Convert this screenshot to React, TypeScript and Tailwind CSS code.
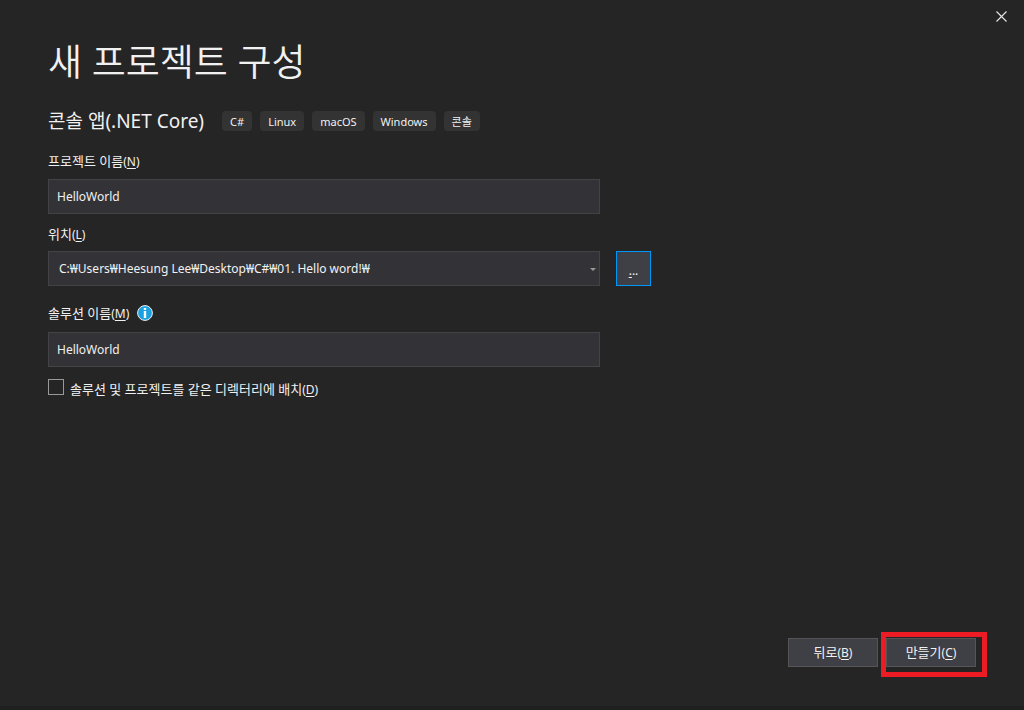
import { useState, type ReactNode } from 'react';

const tags = ['C#', 'Linux', 'macOS', 'Windows', '콘솔'];

const fieldClass =
  'h-[35px] w-full border border-[#434346] bg-[#333337] text-xs text-[#f1f1f1] outline-none';

// Underlined access key, e.g. (N)
const AccessKey = ({ letter }: { letter: string }) => (
  <span className="text-xs">
    (<span className="underline underline-offset-2">{letter}</span>)
  </span>
);

interface FieldLabelProps {
  htmlFor: string;
  accessKey: string;
  children: ReactNode;
}

const FieldLabel = ({ htmlFor, accessKey, children }: FieldLabelProps) => (
  <label htmlFor={htmlFor} className="block text-[13px] leading-[20px]">
    {children}
    <AccessKey letter={accessKey} />
  </label>
);

const InfoIcon = () => (
  <svg className="h-4 w-4" viewBox="0 0 16 16" aria-hidden="true">
    <circle cx="8" cy="8" r="7.4" fill="#1ba1e2" stroke="#f1f1f1" strokeWidth="1" />
    <path d="M6.8 3h2.4v2H6.8zM6.8 6h2.4v7H6.8z" fill="#fff" />
  </svg>
);

const App = () => {
  const [projectName, setProjectName] = useState('HelloWorld');
  const [solutionName, setSolutionName] = useState('HelloWorld');
  const [sameDirectory, setSameDirectory] = useState(false);

  return (
    <div className="flex min-h-screen flex-col border-b-4 border-[#1f1f20] bg-[#252526] font-['Noto_Sans','Noto_Sans_CJK_KR',sans-serif] text-[#f1f1f1]">
      <header className="flex h-8 justify-end px-3">
        <button type="button" aria-label="닫기" className="flex h-8 w-[22px] items-center justify-center">
          <svg className="h-[11px] w-[11px]" viewBox="0 0 11 11" stroke="#e8e8e8" strokeWidth="1.1">
            <path d="M.5.5l10 10M10.5.5l-10 10" />
          </svg>
        </button>
      </header>

      <main className="flex-1 px-12">
        <h1 className="text-[37px] leading-[60px] font-[350]">새 프로젝트 구성</h1>

        <div className="mt-4 flex flex-wrap items-center gap-[18px]">
          <h2 className="text-[19px] leading-[26px]">콘솔 앱(.NET Core)</h2>
          <ul className="flex gap-2">
            {tags.map((tag) => (
              <li key={tag} className="h-5 rounded bg-[#333334] px-2 text-[11px] leading-[21px]">
                {tag}
              </li>
            ))}
          </ul>
        </div>

        <form className="mt-[17px]">
          <div className="max-w-[552px]">
            <FieldLabel htmlFor="project-name" accessKey="N">프로젝트 이름</FieldLabel>
            <input
              id="project-name"
              type="text"
              className={`${fieldClass} mt-2 px-2`}
              value={projectName}
              onChange={(e) => setProjectName(e.target.value)}
            />
          </div>

          <div className="mt-[10px]">
            <FieldLabel htmlFor="location" accessKey="L">위치</FieldLabel>
            <div className="mt-[7px] flex gap-4">
              <div className="relative w-full max-w-[552px]">
                <select id="location" className={`${fieldClass} block appearance-none px-[10px]`}>
                  <option>C:₩Users₩Heesung Lee₩Desktop₩C#₩01. Hello word!₩</option>
                </select>
                <svg
                  className="pointer-events-none absolute top-[17px] right-1 h-[3px] w-[6px]"
                  viewBox="0 0 6 3"
                  fill="#999"
                >
                  <path d="M0 0h6L3 3z" />
                </svg>
              </div>
              <button
                type="button"
                aria-label="찾아보기"
                className="h-[35px] w-[35px] shrink-0 border border-[#0097fb] bg-[#3f3f46] pt-1 text-xs"
              >
                <span className="underline underline-offset-2">.</span>..
              </button>
            </div>
          </div>

          <div className="mt-[17px] max-w-[552px]">
            <div className="flex items-center gap-2">
              <FieldLabel htmlFor="solution-name" accessKey="M">솔루션 이름</FieldLabel>
              <InfoIcon />
            </div>
            <input
              id="solution-name"
              type="text"
              className={`${fieldClass} mt-[9px] px-2`}
              value={solutionName}
              onChange={(e) => setSolutionName(e.target.value)}
            />
          </div>

          <div className="mt-3 flex items-start gap-[6px]">
            <input
              id="same-directory"
              type="checkbox"
              className="h-4 w-4 appearance-none border border-[#999] bg-[#252526] checked:bg-[#0097fb]"
              checked={sameDirectory}
              onChange={(e) => setSameDirectory(e.target.checked)}
            />
            <FieldLabel htmlFor="same-directory" accessKey="D">
              솔루션 및 프로젝트를 같은 디렉터리에 배치
            </FieldLabel>
          </div>
        </form>
      </main>

      <footer className="flex justify-end gap-2 pr-12 pb-[39px]">
        <button type="button" className="h-[29px] w-[90px] border border-[#555] bg-[#3f3f46] text-[13px]">
          뒤로
          <AccessKey letter="B" />
        </button>
        <div className="relative">
          <button type="button" className="h-[29px] w-[90px] border border-[#555] bg-[#3f3f46] text-[13px]">
            만들기
            <AccessKey letter="C" />
          </button>
          {/* Highlight frame around the create button */}
          <div className="pointer-events-none absolute -top-[6px] -right-[11px] -bottom-[10px] -left-[5px] border-5 border-[#ed1c24]" />
        </div>
      </footer>
    </div>
  );
};

export default App;
